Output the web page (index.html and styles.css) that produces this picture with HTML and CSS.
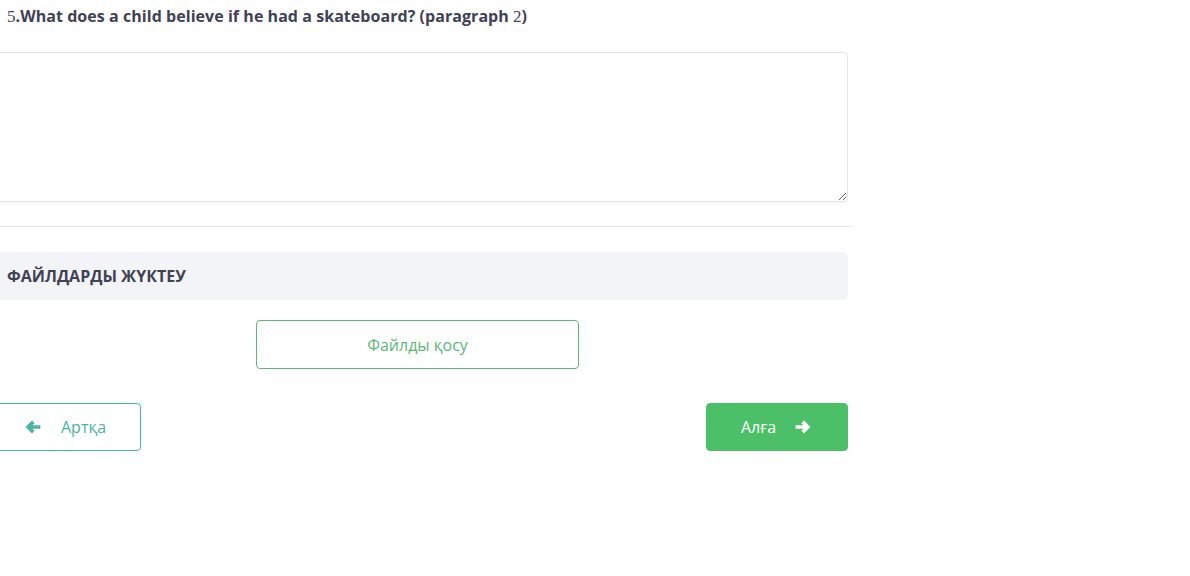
FILE: index.html
```html
<!DOCTYPE html>
<html lang="kk">
<head>
<meta charset="utf-8">
<title>Question</title>
<link rel="stylesheet" href="styles.css">
</head>
<body>
<div class="page">
  <div class="question"><span class="num">5</span>.What does a child believe if he had a skateboard? (paragraph <span class="num">2</span>)</div>
  <textarea class="answer"></textarea>
  <div class="divider"></div>
  <div class="panel">ФАЙЛДАРДЫ ЖҮКТЕУ</div>
  <div class="upload-row">
    <button class="btn-upload" type="button">Файлды қосу</button>
  </div>
  <div class="nav-row">
    <button class="btn-back" type="button">
      <svg class="ico" viewBox="0 0 16 14" width="16" height="14"><path fill="currentColor" d="M0.6 7 L7 0.6 L9.6 3.2 L7.4 5.3 H15.4 V8.7 H7.4 L9.6 10.8 L7 13.4 Z"/></svg>
      <span>Артқа</span>
    </button>
    <button class="btn-next" type="button">
      <span>Алға</span>
      <svg class="ico" viewBox="0 0 16 14" width="16" height="14"><path fill="currentColor" d="M15.4 7 L9 0.6 L6.4 3.2 L8.6 5.3 H0.6 V8.7 H8.6 L6.4 10.8 L9 13.4 Z"/></svg>
    </button>
  </div>
</div>
</body>
</html>
```

FILE: styles.css
```css
html, body {
  margin: 0;
  padding: 0;
  background: #ffffff;
}
body {
  font-family: "Open Sans", "Liberation Sans", sans-serif;
  color: #3f4254;
}
.page {
  margin-left: -13px;
  width: 861px;
  display: flex;
  flex-direction: column;
}
.question {
  margin-top: 4px;
  padding-left: 20px;
  font-size: 16px;
  font-weight: 700;
  line-height: 24px;
  letter-spacing: 0.05px;
  color: #3f4254;
}
.question .num {
  font-family: "Liberation Serif", serif;
  font-weight: 400;
  font-size: 17px;
}
.answer {
  display: block;
  box-sizing: border-box;
  margin: 23px 0 0 0;
  width: 861px;
  height: 150px;
  border: 1px solid #e2e4ea;
  border-radius: 4px;
  background: #fff;
  resize: vertical;
  box-shadow: 0 3px 0 -1px #f7f7f9;
  outline: none;
}
.divider {
  margin-top: 24px;
  margin-right: -5px;
  height: 1px;
  background: #e6e8ee;
  box-shadow: 0 3px 0 -1px #f8f8fa;
}
.panel {
  margin-top: 25px;
  height: 48px;
  box-sizing: border-box;
  padding-left: 20px;
  display: flex;
  align-items: center;
  background: #f3f4f7;
  border-radius: 6px;
  font-size: 16px;
  font-weight: 700;
  color: #3f4254;
}
.upload-row {
  margin-top: 20px;
  display: flex;
  justify-content: center;
}
.btn-upload {
  width: 323px;
  height: 49px;
  background: #fff;
  border: 1px solid #5cb877;
  border-radius: 4px;
  color: #5cb877;
  font-family: "Open Sans", "Liberation Sans", sans-serif;
  font-size: 16px;
  cursor: pointer;
}
.nav-row {
  margin-top: 34px;
  display: flex;
  justify-content: space-between;
}
.btn-back, .btn-next {
  height: 48px;
  border-radius: 4px;
  display: flex;
  align-items: center;
  font-family: "Open Sans", "Liberation Sans", sans-serif;
  font-size: 16px;
  cursor: pointer;
}
.btn-back {
  width: 154px;
  background: #fff;
  border: 1px solid #4db3a3;
  color: #4db3a3;
  padding: 0 0 0 37px;
  gap: 20px;
}
.btn-next {
  width: 142px;
  background: #4cbf69;
  border: 1px solid #4cbf69;
  color: #ffffff;
  padding: 0 0 0 34px;
  gap: 19px;
}
.ico {
  display: block;
}
```
